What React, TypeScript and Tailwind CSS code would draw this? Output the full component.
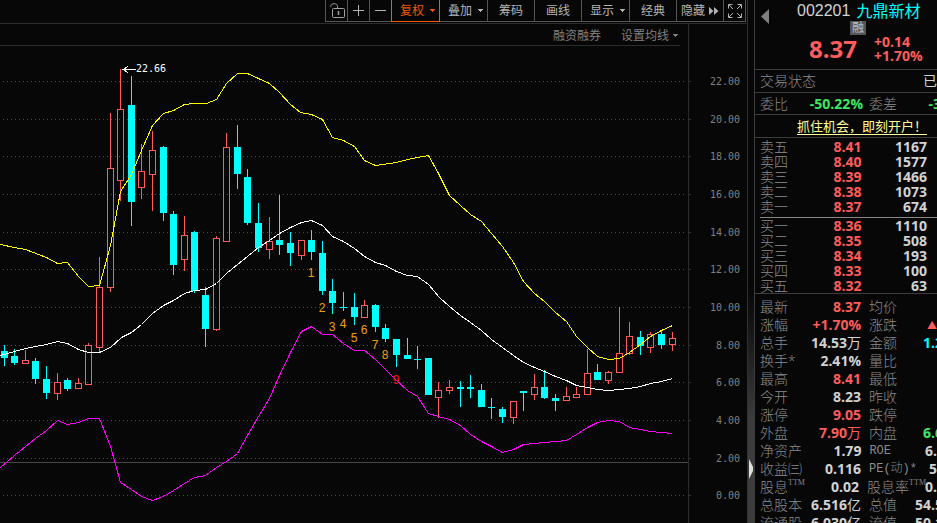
import { ReactNode } from "react";

type Candle = {
  x: number;
  high: number;
  top: number;
  bottom: number;
  low: number;
  up: boolean;
};

// x, high, body top, body bottom, low, rising (1) or falling (0)
const rawCandles = [
  [4, 345, 351, 358, 366, 0],
  [14, 349, 356, 363, 365, 0],
  [25, 350, 360, 364, 364, 1],
  [35, 358, 361, 379, 384, 0],
  [46, 366, 379, 393, 399, 0],
  [57, 373, 382, 394, 400, 1],
  [67, 378, 380, 389, 391, 0],
  [78, 378, 383, 389, 389, 1],
  [88, 343, 345, 385, 385, 1],
  [99, 257, 287, 348, 353, 1],
  [110, 113, 168, 288, 292, 1],
  [120, 69, 109, 181, 201, 1],
  [131, 76, 105, 202, 226, 0],
  [141, 144, 171, 188, 199, 1],
  [152, 131, 150, 175, 211, 1],
  [163, 146, 147, 213, 221, 0],
  [173, 211, 214, 265, 275, 0],
  [184, 216, 235, 260, 271, 1],
  [194, 231, 232, 291, 293, 0],
  [205, 287, 295, 329, 347, 0],
  [216, 236, 238, 330, 331, 1],
  [226, 133, 147, 242, 242, 1],
  [237, 125, 147, 174, 189, 0],
  [247, 169, 177, 223, 225, 0],
  [258, 203, 223, 248, 252, 0],
  [269, 217, 241, 250, 259, 1],
  [279, 195, 240, 245, 255, 0],
  [290, 232, 243, 253, 266, 0],
  [301, 240, 240, 256, 260, 1],
  [311, 230, 240, 252, 260, 0],
  [322, 241, 253, 291, 295, 0],
  [332, 279, 291, 303, 314, 0],
  [343, 292, 307, 308, 311, 0],
  [354, 293, 307, 317, 325, 0],
  [364, 300, 305, 318, 318, 1],
  [375, 304, 305, 327, 332, 0],
  [385, 324, 328, 339, 342, 0],
  [396, 339, 339, 355, 367, 0],
  [407, 338, 355, 359, 359, 0],
  [417, 346, 359, 360, 369, 0],
  [428, 358, 358, 395, 395, 0],
  [438, 382, 390, 398, 418, 1],
  [449, 380, 387, 391, 394, 1],
  [460, 381, 387, 389, 407, 0],
  [470, 375, 387, 389, 398, 0],
  [481, 384, 390, 407, 407, 0],
  [491, 398, 407, 408, 419, 0],
  [502, 407, 409, 417, 423, 0],
  [513, 401, 401, 418, 424, 1],
  [523, 391, 391, 393, 411, 0],
  [534, 374, 387, 395, 400, 1],
  [544, 370, 387, 398, 399, 0],
  [555, 394, 398, 401, 411, 0],
  [566, 387, 396, 401, 401, 1],
  [576, 387, 394, 398, 398, 1],
  [587, 349, 373, 395, 395, 1],
  [597, 364, 372, 380, 380, 0],
  [608, 371, 372, 381, 384, 1],
  [619, 307, 353, 373, 373, 1],
  [629, 322, 336, 354, 355, 1],
  [640, 331, 337, 346, 355, 0],
  [650, 332, 334, 348, 353, 1],
  [661, 330, 334, 345, 349, 0],
  [672, 332, 338, 345, 351, 1],
];

const candles: Candle[] = rawCandles.map(([x, high, top, bottom, low, up]) => ({
  x,
  high,
  top,
  bottom,
  low,
  up: up === 1,
}));

const upperBand =
  "0,244 14,247 25,249 46,257 57,263 67,262 78,276 88,286 99,285 110,245 120,191 131,174 141,150 152,125 163,113 173,110 184,104 194,103 206,103 216,99 226,83 237,73 247,73 258,78 269,83 279,92 290,104 300,112 311,114 322,119 332,137 343,140 354,146 364,160 375,165 396,162 407,159 417,157 428,155 438,173 449,195 460,205 470,214 481,221 491,233 502,246 513,262 523,281 534,293 544,301 555,312 566,321 576,336 587,347 597,356 608,359 619,358 629,352 640,344 650,336 661,330 672,325";
const middleBand =
  "0,355 14,351 25,348 35,346 46,344 57,341 67,343 78,349 88,352 99,352 110,347 121,337 131,332 141,324 152,313 163,305 173,300 184,293 194,290 205,289 216,283 226,273 237,264 247,256 258,247 269,240 279,233 290,227 301,222 311,220 322,225 332,236 343,241 354,248 364,256 375,262 385,265 396,271 407,275 417,276 428,284 439,297 449,306 460,315 470,322 481,330 491,339 502,347 513,355 523,362 534,367 544,371 555,376 566,380 576,385 587,387 597,389 608,390 619,389 629,388 640,386 650,383 661,381 672,378";
const lowerBand =
  "0,467 14,455 25,446 35,438 46,430 57,420 67,424 78,422 88,418 99,418 110,446 120,482 131,489 141,496 152,500 163,496 173,490 184,483 194,477 205,475 216,467 226,461 237,453 247,435 258,416 269,398 279,375 290,352 301,331 311,326 322,334 332,334 343,343 354,350 364,350 375,359 385,369 396,380 407,390 417,396 428,413 438,416 449,419 460,425 470,434 481,441 491,446 502,452 513,449 523,444 534,443 544,442 555,441 566,440 576,434 587,427 597,422 608,420 619,421 629,427 640,429 650,431 661,432 672,433";

const gridRows: [string, number][] = [
  ["22.00", 81],
  ["20.00", 119],
  ["18.00", 156],
  ["16.00", 194],
  ["14.00", 232],
  ["12.00", 269],
  ["10.00", 307],
  ["8.00", 345],
  ["6.00", 382],
  ["4.00", 420],
  ["2.00", 458],
  ["0.00", 495],
];

// Nine-turn count marks under the candles
const countMarks: [number, number][] = [
  [311, 277],
  [322, 312],
  [332, 331],
  [343, 328],
  [354, 342],
  [364, 334],
  [375, 349],
  [385, 359],
  [396, 384],
];

const asks = [
  ["卖五", "8.41", "1167"],
  ["卖四", "8.40", "1577"],
  ["卖三", "8.39", "1466"],
  ["卖二", "8.38", "1073"],
  ["卖一", "8.37", "674"],
];
const bids = [
  ["买一", "8.36", "1110"],
  ["买二", "8.35", "508"],
  ["买三", "8.34", "193"],
  ["买四", "8.33", "100"],
  ["买五", "8.32", "63"],
];

const RED = "text-[#ff5c5c]";
const GREEN = "text-[#3ee860]";
const CYAN = "text-[#00ffff]";
const LIGHT = "text-[#d2d2d2]";

type Quote = {
  label: string;
  sup?: string;
  value: string;
  unit?: string;
  color: string;
  label2: string;
  latin?: boolean;
  sup2?: string;
  value2?: string;
  color2?: string;
  wide?: boolean;
};

const quotes: Quote[] = [
  { label: "最新", value: "8.37", color: RED, label2: "均价" },
  { label: "涨幅", value: "+1.70%", color: RED, label2: "涨跌", value2: "▲", color2: `${RED} text-[10px]` },
  { label: "总手", value: "14.53", unit: "万", color: LIGHT, label2: "金额", value2: "1.2", color2: CYAN, wide: true },
  { label: "换手*", value: "2.41%", color: LIGHT, label2: "量比" },
  { label: "最高", value: "8.41", color: RED, label2: "最低" },
  { label: "今开", value: "8.23", color: LIGHT, label2: "昨收" },
  { label: "涨停", value: "9.05", color: RED, label2: "跌停" },
  { label: "外盘", value: "7.90", unit: "万", color: RED, label2: "内盘", value2: "6.6", color2: GREEN, wide: true },
  { label: "净资产", value: "1.79", color: LIGHT, label2: "ROE", latin: true, value2: "6.", color2: LIGHT },
  { label: "收益㈢", value: "0.116", color: LIGHT, label2: "PE(动)*", latin: true, value2: "5", color2: LIGHT },
  { label: "股息", sup: "TTM", value: "0.02", color: LIGHT, label2: "股息率", sup2: "TTM", value2: "0.", color2: LIGHT },
  { label: "总股本", value: "6.516", unit: "亿", color: LIGHT, label2: "总值", value2: "54.5", color2: LIGHT, wide: true },
  { label: "流通股", value: "6.030", unit: "亿", color: LIGHT, label2: "流值", value2: "50.1", color2: LIGHT, wide: true },
];

const Caret = () => (
  <svg width="5" height="3" viewBox="0 0 5 3" fill="currentColor" shapeRendering="crispEdges">
    <path d="M0 0h5v1H4v1H3v1H2V2H1V1H0z" />
  </svg>
);

const ToolButton = ({
  width,
  active,
  label,
  children,
}: {
  width: string;
  active?: boolean;
  label?: string;
  children: ReactNode;
}) => (
  <button
    aria-label={label}
    className={`${width} flex h-[22px] items-center justify-center border-r border-b ${
      active
        ? "relative -ml-px border-l border-[#f05a00] text-[#f05a00]"
        : "border-[#555555]"
    }`}
  >
    {children}
  </button>
);

// Text with a drop-down caret
const MenuText = ({ text }: { text: string }) => (
  <span className="flex items-center gap-1.5 pl-1">
    {text}
    <Caret />
  </span>
);

const Toolbar = () => (
  <div className="flex h-[22px] justify-end pr-px text-xs text-[#b4b4b4]">
    <div className="flex border-l border-[#555555]">
      <ToolButton width="w-[22px]" label="锁定">
        <svg width="16" height="16" viewBox="0 0 16 16" fill="none" stroke="#a0a0a0">
          <rect x="3.5" y="5.5" width="12" height="9" rx="1" />
          <path d="M8.5 5.5V3.5C8.5 1.8 7.200 .7 5.2 .7S1.700 1.800 1.700 3.800" />
          <path d="M9.500 8v4" strokeWidth="1.500" />
        </svg>
      </ToolButton>
      <ToolButton width="w-[22px]" label="放大">
        <svg width="11" height="11" viewBox="0 0 11 11" stroke="#b4b4b4" shapeRendering="crispEdges">
          <path d="M0 5.500h11M5.500 0v11" />
        </svg>
      </ToolButton>
      <ToolButton width="w-[22px]" label="缩小">
        <svg width="11" height="11" viewBox="0 0 11 11" stroke="#b4b4b4" shapeRendering="crispEdges">
          <path d="M0 5.500h11" />
        </svg>
      </ToolButton>
      <ToolButton width="w-[49px]" active>
        <MenuText text="复权" />
      </ToolButton>
      <ToolButton width="w-[48px]">
        <MenuText text="叠加" />
      </ToolButton>
      <ToolButton width="w-[47px]">筹码</ToolButton>
      <ToolButton width="w-[47px]">画线</ToolButton>
      <ToolButton width="w-[48px]">
        <MenuText text="显示" />
      </ToolButton>
      <ToolButton width="w-[47px]">经典</ToolButton>
      <ToolButton width="w-[47px]">
        <span className="mr-1">隐藏</span>
        <svg width="10" height="8" viewBox="0 0 10 8" fill="currentColor">
          <path d="M0 0l4.500 4L0 8zM5 0l4.500 4L5 8z" />
        </svg>
      </ToolButton>
      <ToolButton width="w-[22px]" label="全屏">
        <svg width="14" height="14" viewBox="0 0 14 14" fill="none" stroke="#b4b4b4">
          <path d="M.5 4.500v-4h4M9.500.5h4v4M13.500 9.500v4h-4M4.500 13.500h-4v-4" />
          <path d="M1 1l4 4M13 1L9 5M13 13L9 9M1 13l4-4" />
        </svg>
      </ToolButton>
    </div>
  </div>
);

const PriceChart = () => (
  <svg viewBox="0 46 747 477" className="block w-full" shapeRendering="crispEdges">
    {/* Grid and price axis */}
    {gridRows.map(([price, y]) => (
      <g key={price}>
        <line x1="3" x2="686" y1={y + 0.5} y2={y + 0.5} stroke="#4d4d4d" strokeDasharray="1 3" />
        <rect x="688" y={y} width="3" height="1" fill="#333333" />
        <text
          x="740"
          y={y + 4}
          textAnchor="end"
          fill="#808080"
          className="font-['DejaVu_Sans_Mono',monospace] text-[10px]"
        >
          {price}
        </text>
      </g>
    ))}
    <rect x="688" y="46" width="1" height="477" fill="#2c2c2c" />
    <rect x="0" y="462" width="688" height="1" fill="#484848" />

    {/* Candles */}
    {candles.map((c) =>
      c.up ? (
        <g key={c.x}>
          <rect x={c.x} y={c.high} width="1" height={c.top - c.high} fill="#ff5c5c" />
          <rect x={c.x} y={c.bottom} width="1" height={c.low - c.bottom} fill="#ff5c5c" />
          <rect
            x={c.x - 2.5}
            y={c.top + 0.5}
            width="6"
            height={c.bottom - c.top - 1}
            fill="none"
            stroke="#ff5c5c"
          />
        </g>
      ) : (
        <g key={c.x} fill="#00ffff">
          <rect x={c.x} y={c.high} width="1" height={c.low - c.high} />
          <rect x={c.x - 3} y={c.top} width="7" height={c.bottom - c.top} />
        </g>
      )
    )}

    {/* Bands */}
    <g fill="none" transform="translate(0.5 0.5)">
      <polyline points={upperBand} stroke="#ffff00" />
      <polyline points={middleBand} stroke="#ffffff" />
      <polyline points={lowerBand} stroke="#ff00ff" />
    </g>

    {/* Highest price */}
    <path d="M122 69.500h14M128 66.500l-5 3l5 3" fill="none" stroke="#ffffff" />
    <text x="136" y="72" fill="#ffffff" className="font-['DejaVu_Sans_Mono',monospace] text-[10px]">
      22.66
    </text>

    {countMarks.map(([x, y], i) => (
      <text
        key={x}
        x={x}
        y={y}
        textAnchor="middle"
        fill={i === 8 ? "#ff1010" : "#f0a010"}
        className="font-['Liberation_Sans',sans-serif] text-xs"
      >
        {i + 1}
      </text>
    ))}
  </svg>
);

const OrderRows = ({ rows, name }: { rows: string[][]; name: string }) => (
  <table className="w-[167px] table-fixed border-collapse" aria-label={name}>
    <tbody>
      {rows.map(([label, price, volume]) => (
        <tr key={label} className="h-[15px] leading-[15px]">
          <th scope="row" className="w-9 p-0 text-left font-light text-[#8c8c8c]">
            {label}
          </th>
          <td className={`p-0 text-right font-bold ${RED}`}>{price}</td>
          <td className={`p-0 text-right font-bold ${LIGHT}`}>{volume}</td>
        </tr>
      ))}
    </tbody>
  </table>
);

const Sup = ({ text }: { text: string }) => (
  <span className="self-start font-['Liberation_Serif',serif] text-[8px] leading-[10px] text-[#85858f]">
    {text}
  </span>
);

const QuotePanel = () => (
  <aside className="w-[182px] shrink-0 overflow-hidden text-sm whitespace-nowrap text-[#8c8c8c]">
    {/* Name and last price */}
    <div className="flex h-[70px] border-b border-[#3c3c3c]">
      <button aria-label="上一只" className="mt-2 ml-1.5 h-4">
        <svg width="8" height="15" viewBox="0 0 8 15" fill="#808080">
          <path d="M8 0v15L0 7.500z" />
        </svg>
      </button>
      <div className="ml-7 flex flex-col">
        <div className="flex h-[21px] items-center text-base leading-5">
          <span className="mr-1.5 font-['Liberation_Sans',sans-serif] text-[#d2d2d2]">002201</span>
          <span className={CYAN}>九鼎新材</span>
        </div>
        <span className="ml-[53px] h-[14px] w-4 bg-[#555555] text-center text-xs leading-[14px] text-[#c0c0c0]">
          融
        </span>
        <div className={`ml-3 flex items-center font-bold ${RED}`}>
          <span className="mr-[17px] text-2xl leading-7">8.37</span>
          <div className="flex flex-col text-sm leading-[14px]">
            <span>+0.14</span>
            <span>+1.70%</span>
          </div>
        </div>
      </div>
    </div>

    <div className="flex h-[23px] items-center border-b border-[#3c3c3c] pl-[5px]">
      <span className="font-light">交易状态</span>
      <span className={`ml-auto ${LIGHT}`}>已</span>
    </div>
    <div className="flex h-[22px] items-center border-b border-[#3c3c3c] pl-[5px] leading-5">
      <span className="w-7 font-light">委比</span>
      <span className={`w-[75px] text-right font-bold ${GREEN}`}>-50.22%</span>
      <span className="ml-1.5 font-light">委差</span>
      <span className={`-mr-1 ml-auto font-bold ${GREEN}`}>-3</span>
    </div>
    <div className="flex h-[23px] items-center border-b border-[#3c3c3c] pl-[42px]">
      <a href="#open" className="border-b border-[#ffff99] text-[13px] leading-4 text-[#ffff99]">
        抓住机会，即刻开户！
      </a>
    </div>

    {/* Order book */}
    <div className="border-b border-[#3c3c3c] pt-px pl-[5px]">
      <OrderRows rows={asks} name="卖盘" />
      <div className="mt-[3px] border-b border-[#868686]"></div>
      <OrderRows rows={bids} name="买盘" />
    </div>

    {/* Figures */}
    <dl className="pt-1 pl-[5px]">
      {quotes.map((q) => (
        <div key={q.label} className="flex h-[18px] items-center leading-[18px]">
          <dt className="flex shrink-0 font-light">
            {q.label}
            {q.sup && <Sup text={q.sup} />}
          </dt>
          <dd className={`ml-auto flex shrink-0 font-bold ${q.color}`}>
            {q.value}
            {q.unit && <span className="font-normal">{q.unit}</span>}
          </dd>
          <dt
            className={`ml-2 flex shrink-0 font-light ${
              q.latin
                ? "font-['Liberation_Mono','Noto_Sans_CJK_SC',monospace] text-xs leading-[18px]"
                : ""
            }`}
          >
            {q.label2}
            {q.sup2 && <Sup text={q.sup2} />}
          </dt>
          {/* Keeps the second column 68px wide, whatever its label */}
          <dd
            className={`flex justify-end font-bold ${
              q.latin
                ? q.label2 === "ROE"
                  ? "w-[46px]"
                  : "w-5"
                : q.sup2
                  ? "w-[11px]"
                  : "w-10"
            } ${q.wide ? "-mr-1.5 w-[46px]" : ""} ${q.color2 ?? ""}`}
          >
            {q.value2}
          </dd>
        </div>
      ))}
    </dl>
  </aside>
);

export default function App() {
  return (
    <div className="flex h-screen overflow-hidden bg-[#070707] font-['Open_Sans','Noto_Sans_CJK_SC',sans-serif]">
      <main className="min-w-0 flex-1">
        <Toolbar />
        <div className="mt-px flex h-[23px] border-t border-[#2c2c2c] text-xs text-[#808080]">
          <div className="mr-2 flex flex-1 items-center justify-end border-b border-[#2c2c2c] pt-0.5">
            <button>融资融券</button>
            <button className="ml-5 flex items-center gap-1 pr-0.5">
              设置均线
              <Caret />
            </button>
          </div>
          <div className="w-[59px] border-l border-[#2c2c2c]"></div>
        </div>
        <PriceChart />
      </main>

      {/* Splitter with its collapse handle */}
      <div className="flex w-2 shrink-0 flex-col justify-end border-r border-l border-r-[#3c3c3c] border-l-[#303030] bg-linear-to-b from-[#070707] from-55% to-[#3c3c3c] to-80%">
        <button aria-label="收起" className="mb-11 ml-px">
          <svg width="4" height="20" viewBox="0 0 4 20" fill="#e0e0e0">
            <path d="M0 0l4 8v4L0 20z" />
          </svg>
        </button>
      </div>

      <QuotePanel />
    </div>
  );
}
